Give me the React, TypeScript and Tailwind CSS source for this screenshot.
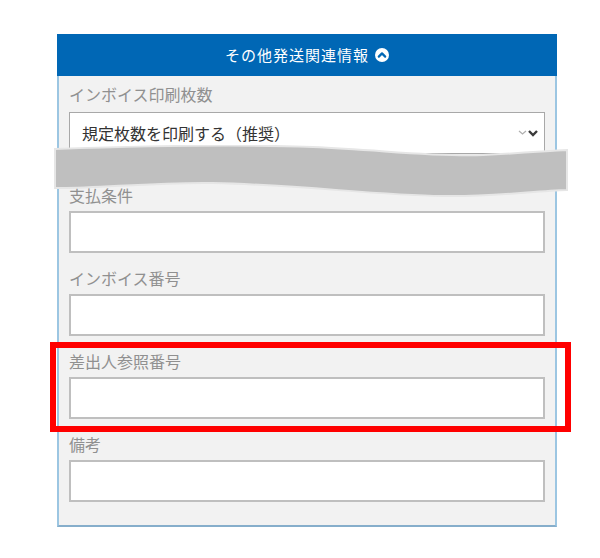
import { useState } from "react";

const fieldFont = { fontFamily: '"Noto Sans CJK JP", "Noto Sans", sans-serif' };

const Field = ({ label }: { label: string }) => (
  <div className="flex flex-col">
    <label className="text-[16px] leading-[20px] text-[#909090]">{label}</label>
    <input
      type="text"
      className="mt-[6px] h-[42px] w-full border-2 border-[#bfbfbf] bg-white px-3 text-[16px] outline-none"
    />
  </div>
);

const App = () => {
  const [open, setOpen] = useState(true);

  return (
    <div className="min-h-[558px] w-[600px] bg-white pt-[34px]" style={fieldFont}>
      <div className="ml-[57px] w-[500px]">
        <button
          type="button"
          onClick={() => setOpen(!open)}
          className="flex h-[42px] w-full items-center justify-center gap-[6px] bg-[#0067b5] text-[15px] tracking-[1px] text-white"
        >
          <span>その他発送関連情報</span>
          <svg width="14" height="14" viewBox="0 0 14 14">
            <circle cx="7" cy="7" r="7" fill="#ffffff" />
            <path d="M3.8 8.6 L7 5.4 L10.2 8.6" fill="none" stroke="#0067b5" strokeWidth="2.2" strokeLinecap="round" strokeLinejoin="round" />
          </svg>
        </button>

        <div className="relative border-x-2 border-b-2 border-x-[#9cc6e2] border-b-[#86aecb] bg-[#f2f2f2] px-[10px] pb-[23px] pt-[8px]">
          <div className="flex flex-col">
            <label className="text-[16px] leading-[20px] text-[#909090]">インボイス印刷枚数</label>
            <div className="mt-[8px] flex h-[42px] items-center justify-between border border-[#a8a8a8] bg-white pl-[12px] pr-[4px]">
              <span className="text-[16px] text-[#333333]">規定枚数を印刷する（推奨）</span>
              <svg width="22" height="10" viewBox="0 0 22 10">
                <path d="M1 3 L4.5 6 L8 3" fill="none" stroke="#b0b0b0" strokeWidth="1.3" />
                <path d="M11 3 L15 7 L19 3" fill="none" stroke="#3a3a3a" strokeWidth="2.4" />
              </svg>
            </div>
          </div>

          <div className="mt-[31px] flex flex-col gap-[15px]">
            <Field label="支払条件" />
            <Field label="インボイス番号" />
            <div className="relative">
              <Field label="差出人参照番号" />
              <div className="absolute -bottom-[13px] -left-[19px] -right-[26px] -top-[9px] border-[6px] border-[#ff0000]" />
            </div>
            <Field label="備考" />
          </div>

          <svg
            className="absolute left-[-6px] top-[69px]"
            width="516"
            height="56"
            viewBox="0 0 516 56"
          >
            <path
              d="M2 4 C90 1 180 -1 260 2 C330 5 380 12 430 10 C470 8 495 6 514 5 L514 45 C480 46 440 52 390 51 C320 50 250 40 160 38 C100 37 40 44 2 43 Z"
              fill="#bfbfbf"
              stroke="#e6e6e6"
              strokeWidth="2"
            />
          </svg>
        </div>
      </div>
    </div>
  );
};

export default App;
